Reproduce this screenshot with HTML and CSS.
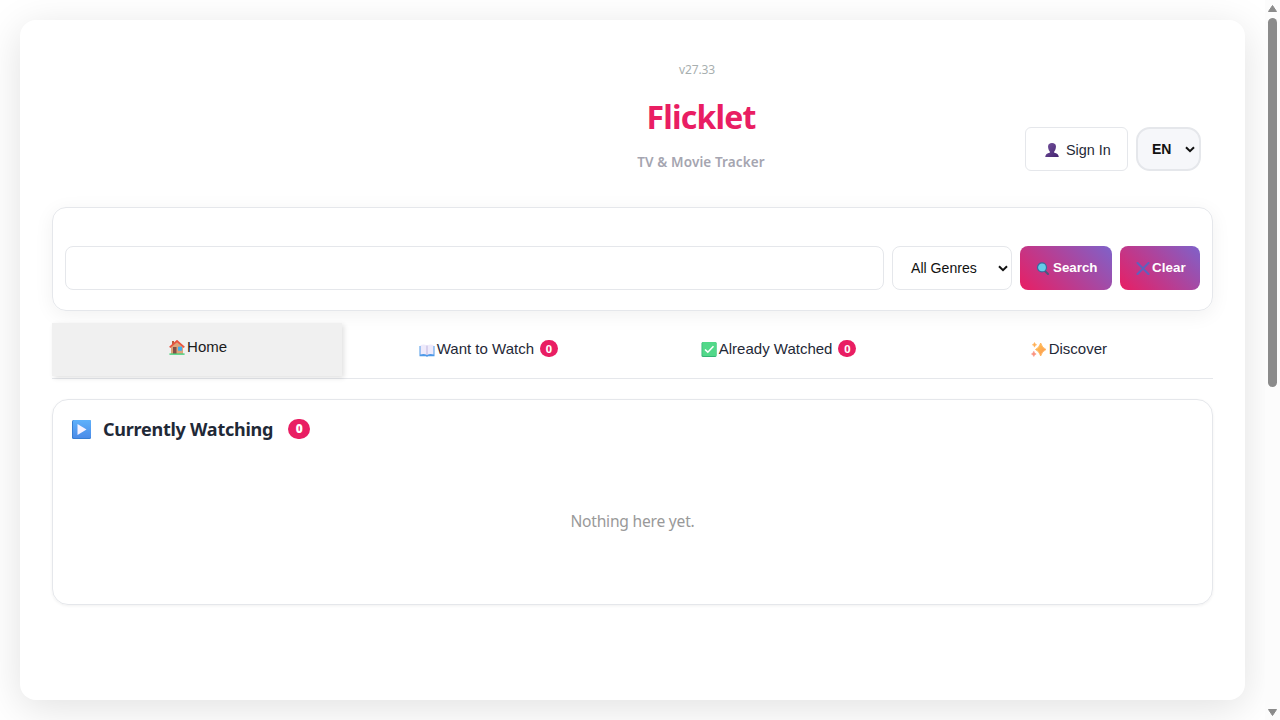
FILE: index.html
```html
<!DOCTYPE html>
<html lang="en">
<head>
<meta charset="utf-8">
<title>Flicklet</title>
<link rel="stylesheet" href="styles.css">
</head>
<body>
<svg width="0" height="0" class="defs">
  <defs>
    <linearGradient id="gp" x1="0" y1="0" x2="1" y2="1"><stop offset="0" stop-color="#74529c"/><stop offset="1" stop-color="#432370"/></linearGradient>
    <linearGradient id="gb" x1="0" y1="0" x2="0" y2="1"><stop offset="0" stop-color="#5eb1fb"/><stop offset="1" stop-color="#4c8ce8"/></linearGradient>
    <linearGradient id="gs" x1="0" y1="0" x2="1" y2="1"><stop offset="0" stop-color="#ffc84e"/><stop offset="1" stop-color="#fd9153"/></linearGradient>
  </defs>
</svg>
<div class="page">
  <div class="viewport">
    <main class="app">
      <header class="header">
        <div class="brand">
          <div class="version">v27.33</div>
          <h1 class="title">Flicklet</h1>
          <div class="subtitle">TV &amp; Movie Tracker</div>
        </div>
        <div class="controls">
          <button class="signin">
            <svg width="14" height="14" viewBox="0 0 14 14"><path d="M3.7 1.2Q7-1 10.3 1.2 11.4 3 10.7 5.4 10.3 7.5 9.2 8.4V9.8Q13.3 10.4 13.8 14H.2Q.7 10.4 4.8 9.8V8.4Q3.7 7.5 3.3 5.4 2.6 3 3.7 1.2Z" fill="url(#gp)"/></svg>
            <span>Sign In</span>
          </button>
          <div class="lang"><span>EN</span><svg class="chev" width="10" height="7" viewBox="0 0 10 7"><path d="M1 1.2 5 5.2 9 1.2" fill="none" stroke="#111" stroke-width="2"/></svg></div>
        </div>
      </header>
      <section class="search">
        <input class="query" type="text" aria-label="Search">
        <div class="genre"><span>All Genres</span><svg class="chev" width="10" height="7" viewBox="0 0 10 7"><path d="M1 1.2 5 5.2 9 1.2" fill="none" stroke="#111" stroke-width="2"/></svg></div>
        <button class="btn btn-search">
          <svg width="13" height="13" viewBox="0 0 13 13"><path d="M8.5 8.5 12 12" stroke="#49577f" stroke-width="2" stroke-linecap="round"/><circle cx="6" cy="5.4" r="4.5" fill="#64cce9" stroke="#356b9f" stroke-width="1.2"/></svg>
          <span>Search</span>
        </button>
        <button class="btn btn-clear">
          <svg width="14" height="13" viewBox="0 0 14 13"><path d="M1.5 1 12.5 12M12.5 1 1.5 12" stroke="#5c62bd" stroke-width="2" stroke-linecap="round"/></svg>
          <span>Clear</span>
        </button>
      </section>
      <nav class="tabs">
        <div class="tab active">
          <svg width="16" height="15" viewBox="0 0 16 15"><path d="M3 1H5V5H3Z" fill="#bd5b3c"/><path d="M2 7 8 1.4 14 7V14H2Z" fill="#dda47a"/><path d="M.7 7.4 8 1 15.3 7.4" fill="none" stroke="#e9543f" stroke-width="1.8"/><path d="M4 7H7.5V14H4Z" fill="#815047"/><path d="M9 6.7H13V10.7H9Z" fill="#3daff1"/><path d="M.4 13.4H15.6V14.8H.4Z" fill="#43d17a"/></svg>
          <span>Home</span>
        </div>
        <div class="tab">
          <svg class="book" width="16" height="13" viewBox="0 0 16 13"><path d="M.5 2H15.5V12.2H9L8 13 7 12.2H.5Z" fill="#4e99e8"/><path d="M1.5 1Q5-.3 8 1.5 11-.3 14.5 1V10.5Q11 9.4 8 11 5 9.4 1.5 10.5Z" fill="#eeeafb"/><path d="M8 1.5V11" stroke="#bfb5df"/></svg>
          <span>Want to Watch</span><b class="count">0</b>
        </div>
        <div class="tab">
          <svg width="16" height="15" viewBox="0 0 16 15"><rect x=".5" width="15" height="15" rx="1.5" fill="#35b475"/><rect x="1.3" width="14.2" height="14" rx="1.2" fill="#52d889"/><path d="M4 7.5 6.8 10.2 12.5 4.3" fill="none" stroke="#fff" stroke-width="1.6"/></svg>
          <span>Already Watched</span><b class="count">0</b>
        </div>
        <div class="tab">
          <svg width="16" height="15" viewBox="0 0 16 15"><path d="M9.7 1Q10.9 5.6 15 7.5 10.9 9.4 9.7 14 8.3 9.4 4.5 7.5 8.3 5.6 9.7 1Z" fill="url(#gs)" stroke="#ffb052" stroke-width=".8"/><path d="M3.5.4Q3.9 2.3 5.7 2.8 3.9 3.3 3.5 5.2 3.1 3.3 1.3 2.8 3.1 2.3 3.5.4Z" fill="#ffaf55" stroke="#ffaf55" stroke-width=".5"/><path d="M2.8 9.2Q3.2 11.4 5.2 12 3.2 12.6 2.8 14.6 2.4 12.6.4 12 2.4 11.4 2.8 9.2Z" fill="#fb9380" stroke="#fb9380" stroke-width=".5"/></svg>
          <span>Discover</span>
        </div>
      </nav>
      <section class="panel">
        <h2 class="panel-head">
          <svg width="19" height="19" viewBox="0 0 19 19"><rect width="19" height="19" rx="1.5" fill="#377ed2"/><rect x="1" width="18" height="18" rx="1.3" fill="url(#gb)"/><path d="M5.5 4 14.5 9.5 5.5 15Z" fill="#f6f2ff"/></svg>
          <span class="panel-title">Currently Watching</span><b class="pill">0</b>
        </h2>
        <p class="empty">Nothing here yet.</p>
      </section>
    </main>
  </div>
  <aside class="scrollbar">
    <svg width="9" height="7" viewBox="0 0 9 7"><path d="M4.5.5 8.5 6.5H.5Z" fill="#8b8b8b" stroke="#8b8b8b" stroke-linejoin="round"/></svg>
    <div class="thumb"></div>
    <svg width="9" height="7" viewBox="0 0 9 7"><path d="M.5.5H8.5L4.5 6.5Z" fill="#8b8b8b" stroke="#8b8b8b" stroke-linejoin="round"/></svg>
  </aside>
</div>
</body>
</html>
```
FILE: styles.css
```css
* { box-sizing: border-box; }
body { margin: 0; height: 720px; overflow: hidden; background: #fff; color: #1f2937; font-family: "Noto Sans", sans-serif; }
svg { display: block; flex: none; }
.defs { position: absolute; }
button { font-family: "Liberation Sans", Arial, sans-serif; }
.page { display: flex; height: 720px; }
.viewport { width: 1265px; padding: 20px; overflow: hidden; }
.app { height: 680px; padding: 0 32px; border-radius: 16px; background: #fff; box-shadow: 0 8px 40px rgba(0, 0, 0, .12); }
.header { display: flex; justify-content: flex-end; height: 187px; padding-right: 12px; }
.brand { width: 324px; padding-top: 41px; margin-right: 162px; text-align: center; white-space: nowrap; }
.version { padding-right: 8px; font-size: 12px; line-height: 18px; color: #a8afaf; letter-spacing: -.15px; }
.title { margin: 15px 0 0; font-size: 32px; line-height: 45px; font-weight: 700; color: #e91e63; letter-spacing: -.8px; }
.subtitle { margin-top: 13px; font-size: 13.5px; line-height: 20px; font-weight: 600; color: #a5a5b0; letter-spacing: .12px; }
.controls { display: flex; gap: 8px; padding-top: 107px; }
.signin { display: flex; align-items: center; gap: 7px; width: 103px; height: 44px; padding: 2px 0 0 19px; border: 1px solid #e5e7eb; border-radius: 6px; background: #fff; color: #1f2937; font-size: 14.4px; white-space: nowrap; }
.lang, .genre { display: flex; align-items: center; justify-content: space-between; font-family: "Liberation Sans", Arial, sans-serif; color: #111; }
.lang { width: 65px; height: 44px; padding: 0 4px 0 14px; border: 2px solid #e5e7eb; border-radius: 14px; background: #f6f7fa; font-size: 14px; font-weight: 700; }
.search { display: flex; align-items: flex-start; gap: 8px; height: 104px; padding: 38px 12px 0; border: 1px solid #e5e7eb; border-radius: 14px; box-shadow: 0 4px 20px rgba(0, 0, 0, .06); }
.query { flex: 1; min-width: 0; height: 44px; border: 1px solid #e5e7eb; border-radius: 8px; background: #fff; }
.genre { width: 120px; height: 44px; padding: 0 3px 0 18px; border: 1px solid #e5e7eb; border-radius: 8px; font-size: 14.1px; }
.btn { display: flex; align-items: center; height: 44px; padding: 0 0 2px 16px; border: 0; border-radius: 8px; background: linear-gradient(45deg, #e91e63, #7e62ca); color: #fff; font-size: 13.33px; font-weight: 700; }
.btn svg { position: relative; top: 1px; }
.btn-search { width: 92px; gap: 4px; }
.btn-clear { width: 80px; gap: 2px; }
.btn-clear span { letter-spacing: .1px; }
.tabs { display: grid; grid-template-columns: repeat(4, 1fr); height: 56px; margin-top: 12px; border-bottom: 1px solid #e5e7eb; }
.tab { display: flex; align-items: center; justify-content: center; padding: 0 0 5px 2px; gap: 2px; font-family: "Liberation Sans", Arial, sans-serif; font-size: 15px; white-space: nowrap; }
.tab svg { position: relative; top: 1px; }
.tab .book { top: 2px; }
.tab.active { height: 53px; padding-bottom: 6px; background: #f0f0f0; color: #1b1b1b; box-shadow: 2px 2px 5px rgba(0, 0, 0, .12); }
.count { width: 18px; height: 17px; margin-left: 4px; border-radius: 9px; background: #e91e63; color: #fff; font: 700 11px/17px "Noto Sans", sans-serif; text-align: center; }
.panel { height: 206px; margin-top: 20px; border: 1px solid #e5e7eb; border-radius: 16px; box-shadow: 0 1px 3px rgba(0, 0, 0, .06); }
.panel-head { display: flex; align-items: center; height: 20px; margin: 19px 0 0 19px; font-size: 18px; line-height: 20px; white-space: nowrap; }
.panel-title { margin-left: 12px; letter-spacing: -.25px; }
.pill { width: 22px; height: 20px; margin-left: 15px; border-radius: 10px; background: #e91e63; color: #fff; font-size: 12px; line-height: 20px; text-align: center; }
.empty { margin: 70px 0 0; font-size: 15.6px; line-height: 24px; color: #999; text-align: center; letter-spacing: -.22px; }
.scrollbar { display: flex; flex-direction: column; align-items: center; width: 15px; padding: 5px 0 4px; background: #fcfcfc; }
.thumb { width: 9px; height: 369px; margin: 6px 0 auto; border-radius: 5px; background: #8b8b8b; }
```
